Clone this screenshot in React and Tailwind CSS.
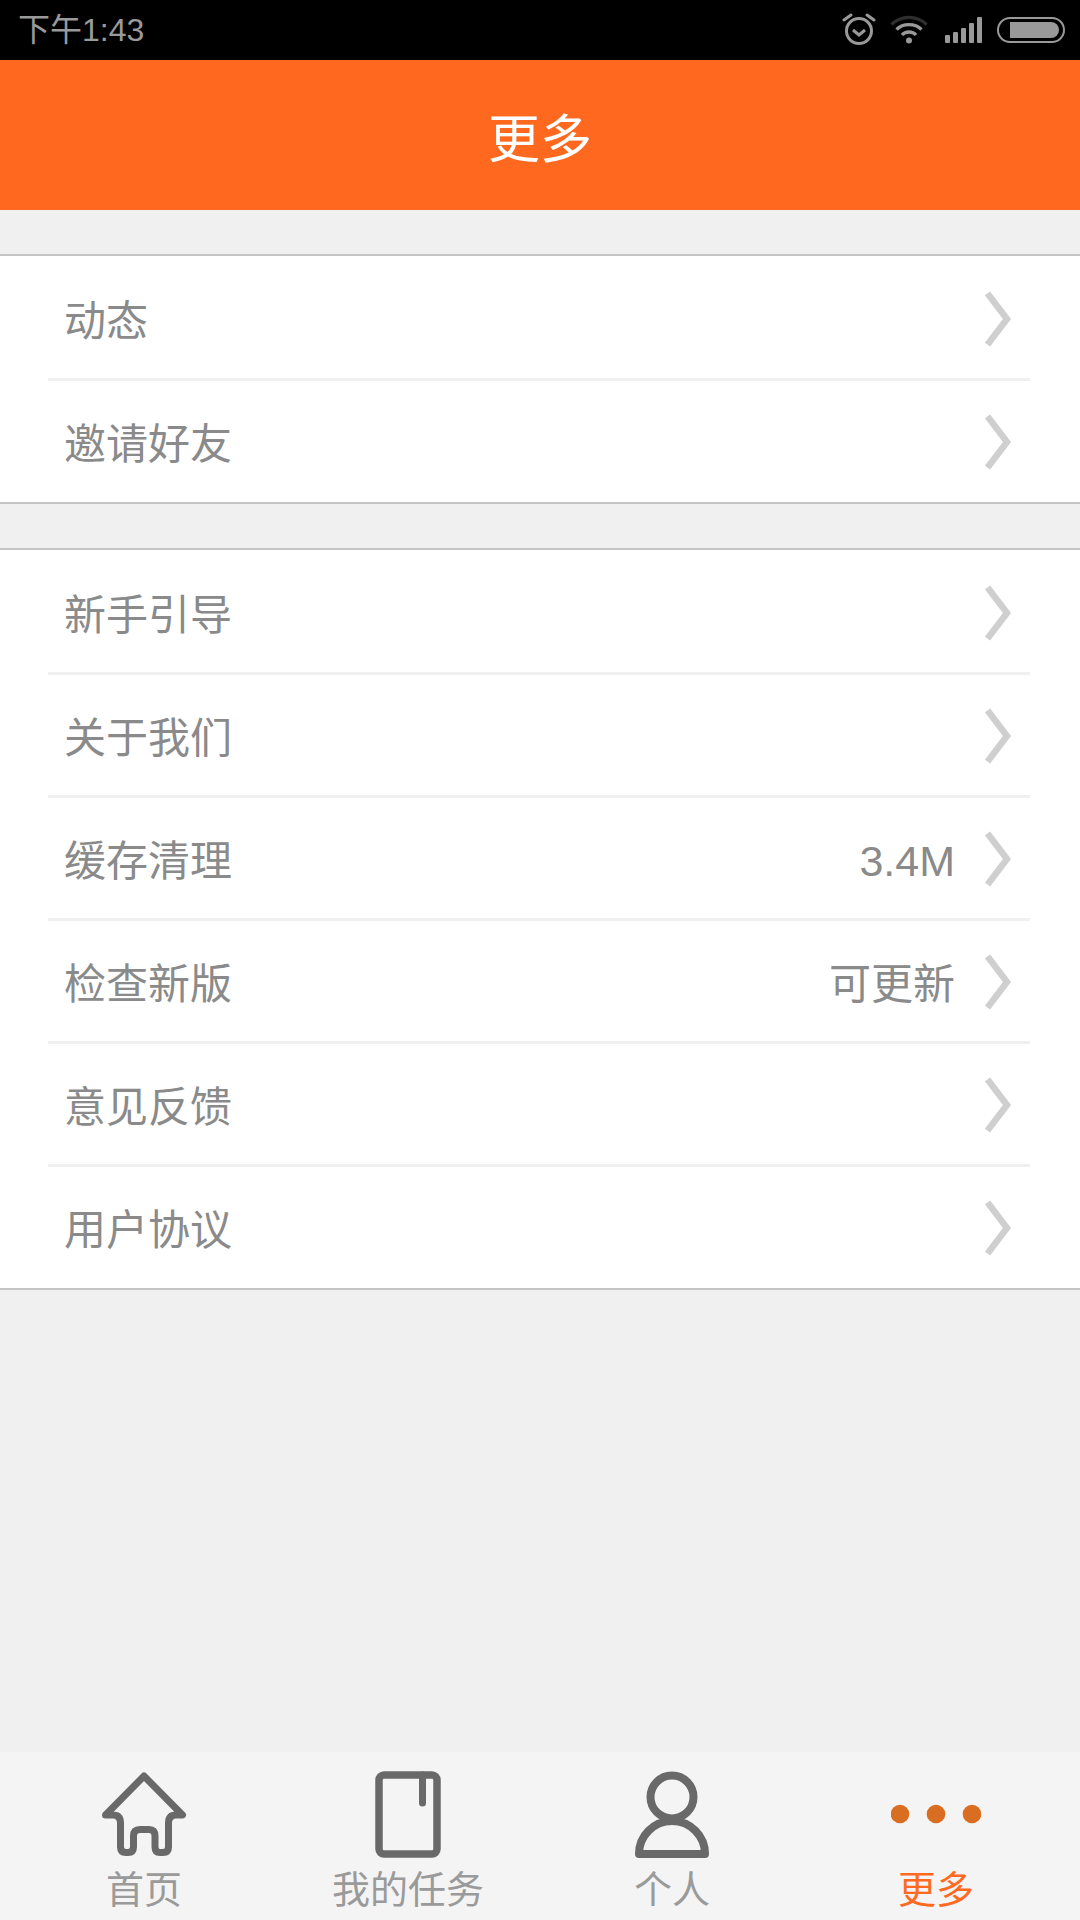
const cjk = { fontFamily: '"Liberation Sans", "Noto Sans CJK SC", sans-serif' };

function Chevron() {
  return (
    <svg className="w-[30px] h-[58px] shrink-0 mt-[2px]" viewBox="0 0 30 58" fill="none">
      <path d="M4.5 6 L22 29 L4.5 52" stroke="#cfcfcf" strokeWidth="6.5" strokeLinecap="square" strokeLinejoin="miter" />
    </svg>
  );
}

function Row({ label, value, last }) {
  return (
    <div className="h-[123px] ml-[48px] mr-[50px] flex items-center relative">
      <div className="flex items-center w-full pl-[16px] pr-[15px] h-full">
        <span className="text-[42px] pt-[7px] text-[#8a8a8a] flex-1">{label}</span>
        {value && <span className={`${value === '3.4M' ? 'text-[43px]' : 'text-[42px]'} pt-[7px] text-[#8a8a8a] mr-[30px]`}>{value}</span>}
        <Chevron />
      </div>
      {!last && <div className="absolute left-0 right-0 -bottom-[2px] h-[3px] bg-[#f0f0f0]" />}
    </div>
  );
}

function Group({ rows }) {
  return (
    <div className="bg-white border-y-2 border-[#c4c4c4]">
      {rows.map((r, i) => (
        <Row key={r.label} {...r} last={i === rows.length - 1} />
      ))}
    </div>
  );
}

function Alarm() {
  return (
    <svg className="w-[34px] h-[34px]" viewBox="0 0 34 34" fill="none" stroke="#999" strokeWidth="3">
      <circle cx="17" cy="18" r="12.5" />
      <path d="M11 17 L17 22 L23 17" />
      <path d="M2 7 L9 2" strokeLinecap="round" />
      <path d="M32 7 L25 2" strokeLinecap="round" />
    </svg>
  );
}

function Wifi() {
  return (
    <svg className="w-[38px] h-[30px]" viewBox="0 0 38 30" fill="none" strokeWidth="3.4">
      <path d="M1.5 9.5 C11 0 27 0 36.5 9.5" stroke="#2e2e2e" />
      <path d="M6.5 14.5 C13 8 25 8 31.5 14.5" stroke="#999" />
      <path d="M12 20 C15.5 16 22.5 16 26 20" stroke="#999" />
      <circle cx="19" cy="25.5" r="3" fill="#999" />
    </svg>
  );
}

function Signal() {
  return (
    <div className="flex items-end gap-[3px] h-[26px]">
      <div className="w-[5px] h-[8px] bg-[#999] rounded-[1px]" />
      <div className="w-[5px] h-[11px] bg-[#999] rounded-[1px]" />
      <div className="w-[5px] h-[15px] bg-[#999] rounded-[1px]" />
      <div className="w-[5px] h-[20px] bg-[#999] rounded-[1px]" />
      <div className="w-[5px] h-[26px] bg-[#999] rounded-[1px]" />
    </div>
  );
}

function Battery() {
  return (
    <div className="w-[68px] h-[26px] rounded-[13px] border-[2px] border-[#999] flex items-center pl-[11px] pr-[4px]">
      <div className="flex-1 h-[16px] bg-[#999] rounded-r-[8px]" />
    </div>
  );
}

function HomeIcon() {
  return (
    <svg className="w-[90px] h-[90px]" viewBox="99 1770 90 90" fill="none">
      <path
        d="M105.5 1815 L144 1776 L182.5 1815 H176 Q168.5 1815 168.5 1823 V1847 Q168.5 1852.5 163 1852.5 H160 Q155 1852.5 155 1847 V1836 Q155 1829.5 149 1829.5 H140 Q133.5 1829.5 133.5 1836 V1847 Q133.5 1852.5 128 1852.5 H126 Q120.5 1852.5 120.5 1847 V1823 Q120.5 1815 113 1815 Z"
        stroke="#696969" strokeWidth="7" strokeLinejoin="round" />
    </svg>
  );
}

function DocIcon() {
  return (
    <svg className="w-[90px] h-[90px]" viewBox="363 1770 90 90" fill="none" stroke="#696969">
      <rect x="379" y="1775" width="58" height="79" rx="5" strokeWidth="7.5" />
      <path d="M422.5 1775 V1803" strokeWidth="7" strokeLinecap="round" />
    </svg>
  );
}

function PersonIcon() {
  return (
    <svg className="w-[90px] h-[90px]" viewBox="627 1770 90 90" fill="none" stroke="#696969" strokeWidth="8">
      <circle cx="672" cy="1797" r="21.5" />
      <path d="M639 1854 A33 33 0 0 1 705 1854 Z" strokeLinejoin="round" />
    </svg>
  );
}

function DotsIcon() {
  return (
    <svg className="w-[90px] h-[90px]" viewBox="891 1770 90 90" fill="#d96d22">
      <circle cx="900" cy="1814" r="9.3" />
      <circle cx="936" cy="1814" r="9.3" />
      <circle cx="972" cy="1814" r="9.3" />
    </svg>
  );
}

function Tab({ icon, label, active }) {
  return (
    <div className="flex flex-col items-center pt-[18px]">
      {icon}
      <span className={`text-[38px] leading-[44px] mt-[8px] ${active ? 'text-[#ff6a1e]' : 'text-[#9a9a9a]'}`}>{label}</span>
    </div>
  );
}

export default function App() {
  return (
    <div className="w-[1080px] h-[1920px] flex flex-col bg-[#f0f0f0]" style={cjk}>
      <div className="h-[60px] bg-black flex items-center pl-[18px] pr-[15px]">
        <span className="text-[32px] text-[#9a9a9a] flex-1">下午1:43</span>
        <div className="flex items-center">
          <Alarm />
          <div className="w-[14px]" />
          <Wifi />
          <div className="w-[17px]" />
          <Signal />
          <div className="w-[15px]" />
          <Battery />
        </div>
      </div>
      <div className="h-[150px] bg-[#ff691f] flex items-center justify-center">
        <span className="text-[52px] pt-[10px] text-white">更多</span>
      </div>
      <div className="flex-1">
        <div className="h-[44px]" />
        <Group rows={[{ label: '动态' }, { label: '邀请好友' }]} />
        <div className="h-[44px]" />
        <Group
          rows={[
            { label: '新手引导' },
            { label: '关于我们' },
            { label: '缓存清理', value: '3.4M' },
            { label: '检查新版', value: '可更新' },
            { label: '意见反馈' },
            { label: '用户协议' },
          ]}
        />
      </div>
      <div className="h-[168px] bg-[#f4f4f4] grid grid-cols-4 px-[12px]">
        <Tab icon={<HomeIcon />} label="首页" />
        <Tab icon={<DocIcon />} label="我的任务" />
        <Tab icon={<PersonIcon />} label="个人" />
        <Tab icon={<DotsIcon />} label="更多" active />
      </div>
    </div>
  );
}
